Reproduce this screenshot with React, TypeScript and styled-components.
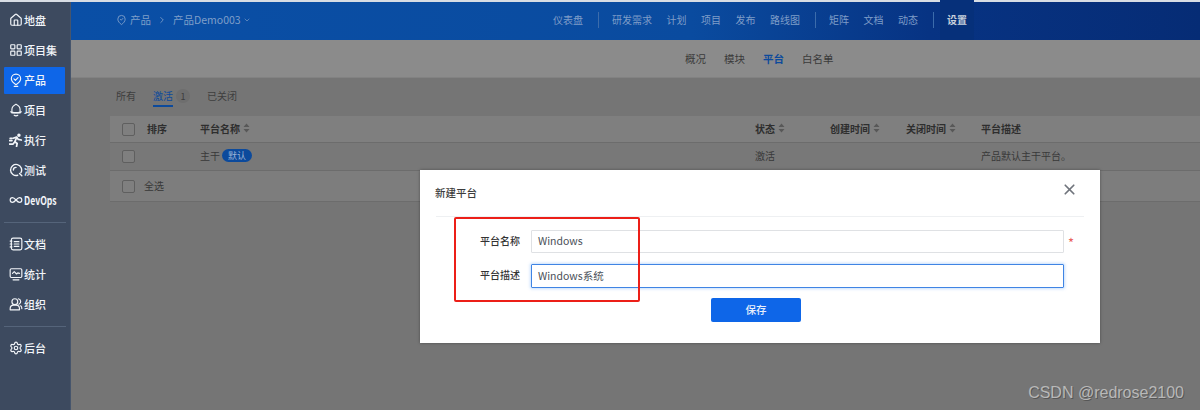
import { ReactNode } from "react";
import styled, { createGlobalStyle } from "styled-components";
import { ChevronDown, ChevronRight, Home, Infinity as InfinityIcon, LayoutGrid, Settings, X } from "lucide-react";

const GlobalStyle = createGlobalStyle`
  html, body {
    margin: 0;
    padding: 0;
    width: 1200px;
    height: 410px;
    overflow: hidden;
    background: #757575;
    font-family: "Noto Sans CJK SC", "Liberation Sans", sans-serif;
  }
  * { box-sizing: border-box; }
`;

const Page = styled.div`
  position: relative;
  display: grid;
  grid-template-columns: 71px 1fr;
  width: 1200px;
  height: 410px;
  padding-top: 2px;
  background: #d8dde4;
  overflow: hidden;
`;

const Sidebar = styled.nav`
  display: flex;
  flex-direction: column;
  padding-top: 5px;
  background: #3d4a5f;
  border-right: 1px solid #46556c;
`;

const NavItem = styled.div<{ $active?: boolean }>`
  display: flex;
  align-items: center;
  height: 27px;
  margin: 0 5px 3px 4px;
  padding: 0 0 2px 5px;
  border-radius: 1px;
  background: ${(p) => (p.$active ? "#0e66e8" : "transparent")};
  color: #f2f5f9;
  font-size: 11px;
  font-weight: 500;
  white-space: nowrap;

  svg {
    flex: none;
    width: 14px;
    height: 14px;
    margin-right: 1px;
  }
`;

const NavLabel = styled.span<{ $narrow?: boolean }>`
  display: inline-block;
  ${(p) => p.$narrow && "font-size: 12px; font-weight: 700; transform: scaleX(0.72); transform-origin: left center;"}
`;

const NavDivider = styled.div`
  height: 1px;
  margin: 5px 4px 8px;
  background: #55647a;
`;

const Main = styled.div`
  display: flex;
  flex-direction: column;
  min-width: 0;
  background: #757575;
`;

const TopBar = styled.header`
  display: flex;
  align-items: center;
  height: 38px;
  padding: 0 0 3px 45px;
  background: linear-gradient(90deg, #0a4fa6 0%, #0a4b9f 55%, #073383 76%, #062c75 100%);
  font-size: 10px;
`;

const Breadcrumb = styled.div`
  display: flex;
  align-items: center;
  gap: 2px;
  width: 437px;
  font-size: 10.5px;
  color: #7f9fc9;

  svg {
    flex: none;
  }
`;

const Crumb = styled.span`
  margin-left: 1px;
`;

const ChevronGap = styled(ChevronRight)`
  margin: 0 3px 0 4px;
`;

const TopMenu = styled.div`
  display: flex;
  align-items: center;
  gap: 14.5px;
`;

const TopLink = styled.span<{ $active?: boolean }>`
  color: ${(p) => (p.$active ? "#c8d0dc" : "#7f9dc8")};
  font-weight: ${(p) => (p.$active ? 700 : 400)};
  ${(p) => p.$active && "margin: -14px -7px -17px; padding: 14px 7px 17px; background: #06307a;"}
`;

const TopDivider = styled.span`
  width: 1px;
  height: 16px;
  margin-right: -1px;
  background: #3c6cab;
`;

const SubBar = styled.div`
  display: flex;
  align-items: center;
  gap: 18px;
  height: 38px;
  padding-left: 614px;
  background: #8b8b8b;
  border-bottom: 1px solid #828282;
  font-size: 10.5px;
`;

const SubLink = styled.span<{ $active?: boolean }>`
  color: ${(p) => (p.$active ? "#0c4a9c" : "#3a3a3a")};
  font-weight: ${(p) => (p.$active ? 700 : 400)};
`;

const Content = styled.div`
  padding: 9px 0 0 39px;
`;

const Tabs = styled.div`
  display: flex;
  align-items: flex-start;
  height: 29px;
  padding-left: 6px;
  font-size: 10px;
`;

const Tab = styled.div<{ $active?: boolean }>`
  height: 20px;
  margin-left: ${(p) => (p.$active ? "17px" : "0")};
  padding-top: 1px;
  line-height: 16px;
  color: ${(p) => (p.$active ? "#0c4a9c" : "#3e3e3e")};
  border-bottom: 2px solid ${(p) => (p.$active ? "#0c4a9c" : "transparent")};
`;

const TabCount = styled.span`
  display: grid;
  place-items: center;
  width: 14px;
  height: 14px;
  margin: 2px 17px 0 3px;
  border-radius: 50%;
  background: #6e6e6e;
  color: #3c3c3c;
  font-size: 9px;
`;

const Table = styled.div`
  display: flex;
  flex-direction: column;
`;

const Row = styled.div<{ $head?: boolean; $foot?: boolean }>`
  display: grid;
  grid-template-columns: 25px 53px 555px 75px 76px 75px 1fr;
  align-items: center;
  height: ${(p) => (p.$foot ? "31px" : p.$head ? "27px" : "28px")};
  padding: 0 0 2px 12px;
  background: ${(p) => (p.$head ? "#7f7f7f" : p.$foot ? "#7d7d7d" : "#787878")};
  border-bottom: 1px solid #6c6c6c;
  font-size: 10px;
  font-weight: ${(p) => (p.$head ? 700 : 400)};
  color: ${(p) => (p.$head ? "#2e2e2e" : "#383838")};
`;

const Check = styled.span`
  display: block;
  width: 13px;
  height: 13px;
  margin-top: 2px;
  border: 1px solid #5f5f5f;
  border-radius: 2px;
  background: #7f7f7f;
`;

const HeadCell = styled.span`
  display: inline-flex;
  align-items: center;
  gap: 3px;
`;

const Name = styled.span`
  display: flex;
  align-items: center;
  gap: 2px;
`;

const DefaultTag = styled.span`
  height: 13px;
  padding: 0 6px;
  border-radius: 7px;
  background: #0c4a9c;
  color: #9cb4d6;
  font-size: 9px;
  line-height: 13px;
`;

const SelectAll = styled.span`
  margin-left: -3px;
  grid-column: 2 / span 2;
`;

const Sort = ({ children }: { children: ReactNode }) => (
  <HeadCell>
    {children}
    <svg width="7" height="10" viewBox="0 0 7 10" fill="#585858">
      <path d="M3.500 0.500 6.500 4H.5zM3.500 9.500 .5 6h6z" />
    </svg>
  </HeadCell>
);

const Modal = styled.div`
  position: absolute;
  left: 420px;
  top: 170px;
  width: 680px;
  height: 173px;
  padding: 0 16px;
  background: #fff;
  box-shadow: 0 0 3px rgba(0, 0, 0, 0.35);
`;

const ModalHead = styled.div`
  display: flex;
  align-items: center;
  justify-content: space-between;
  height: 47px;
  padding-bottom: 2px;
  border-bottom: 1px solid #eef0f2;
  font-size: 10.5px;
  font-weight: 500;
  color: #3c3c3c;
`;

const Title = styled.span`
  margin-left: -1px;
`;

const CloseIcon = styled(X)`
  margin: -5px 6px 0 0;
  color: #70747c;
`;

const Form = styled.div`
  display: flex;
  flex-direction: column;
  gap: 11px;
  padding-top: 13px;
`;

const Field = styled.div`
  display: flex;
  align-items: center;
`;

const FieldLabel = styled.label`
  width: 84px;
  margin: -3px 11px 0 0;
  text-align: right;
  font-size: 10px;
  font-weight: 500;
  color: #333;
`;

const FieldBox = styled.div<{ $focus?: boolean }>`
  display: flex;
  align-items: center;
  width: 533px;
  height: ${(p) => (p.$focus ? "24px" : "23px")};
  padding: 0 0 2px 6px;
  border: 1px solid ${(p) => (p.$focus ? "#3f84e4" : "#dfe1e4")};
  border-radius: 1px;
  box-shadow: ${(p) => (p.$focus ? "0 0 3px 1px rgba(90, 160, 245, 0.35)" : "none")};
  font-size: 10.5px;
  color: #4a5058;
`;

const Star = styled.span`
  margin: 2px 0 0 4px;
  color: #e9605c;
  font-size: 13px;
  line-height: 1;
`;

const SaveRow = styled.div`
  display: flex;
  padding: 10px 0 0 275px;
`;

const SaveButton = styled.button`
  width: 90px;
  height: 24px;
  padding: 0 0 2px;
  border: 0;
  border-radius: 2px;
  background: #0e66e8;
  color: #e6effc;
  font: 500 10.5px "Noto Sans CJK SC", sans-serif;
`;

const Highlight = styled.div`
  position: absolute;
  left: 454px;
  top: 217px;
  width: 186px;
  height: 85px;
  border: 2px solid #ec1f18;
  border-radius: 2px;
  pointer-events: none;
`;

const Watermark = styled.div`
  position: absolute;
  right: 16px;
  bottom: 8px;
  font-family: "Liberation Sans", sans-serif;
  font-size: 16px;
  color: #b8b8b8;
  text-shadow: 1px 1px 0 rgba(60, 60, 60, 0.55);
`;

const Icon = ({ children, weight = 2 }: { children: ReactNode; weight?: number }) => (
  <svg viewBox="0 0 24 24" fill="none" stroke="currentColor" strokeWidth={weight} strokeLinecap="round" strokeLinejoin="round">
    {children}
  </svg>
);

const navGroups: { icon: ReactNode; label: string; active?: boolean; narrow?: boolean }[][] = [
  [
    { icon: <Home />, label: "地盘" },
    { icon: <LayoutGrid />, label: "项目集" },
    {
      icon: (
        <Icon>
          <path d="M12 20c-4-2.500-8-6-8-10a8 8 0 0 1 16 0c0 4-4 7.500-8 10z" />
          <path d="m8.500 10 2.500 2.500 4.500-4.500" />
          <path d="M9 23h6" />
        </Icon>
      ),
      label: "产品",
      active: true,
    },
    {
      icon: (
        <Icon>
          <path d="M12 2c4 2 7 5 7 9v6H5v-6c0-4 3-7 7-9z" />
          <path d="M3 15c2 2 16 2 18 0" />
          <path d="M9 21c1.500 1.500 4.500 1.500 6 0" />
        </Icon>
      ),
      label: "项目",
    },
    {
      icon: (
        <Icon weight={3}>
          <circle cx="17" cy="4" r="1.500" />
          <path d="m7 9 6-2 3 4 5 1" />
          <path d="m13 8-3 7 4 3-1 5" />
          <path d="M10 15 7 19H1" />
          <path d="M2 9h3M1 13h4" />
        </Icon>
      ),
      label: "执行",
    },
    {
      icon: (
        <Icon weight={2.4}>
          <path d="M15 21a9.500 9.500 0 1 1 5.500-4.500" />
          <path d="m18 18 4 4" />
          <path d="M7.500 12a4.500 4.500 0 0 1 4.500-4.500" />
        </Icon>
      ),
      label: "测试",
    },
    { icon: <InfinityIcon />, label: "DevOps", narrow: true },
  ],
  [
    {
      icon: (
        <Icon>
          <rect x="4" y="2" width="18" height="20" rx="3" />
          <path d="M9 8h8M9 12h8M9 16h8M2 7h3M2 12h3M2 17h3" />
        </Icon>
      ),
      label: "文档",
    },
    {
      icon: (
        <Icon>
          <rect x="2" y="3" width="20" height="15" rx="2" />
          <path d="m6 11 3-3 4 4 2-2 3 1" />
          <path d="M7 22h10" />
        </Icon>
      ),
      label: "统计",
    },
    {
      icon: (
        <Icon>
          <circle cx="10" cy="8" r="5" />
          <path d="M2 22v-2a6 6 0 0 1 6-6h4a6 6 0 0 1 6 6v2z" />
          <path d="M16 3a5 5 0 0 1 1 9.500M20 15a6 6 0 0 1 2 5" />
        </Icon>
      ),
      label: "组织",
    },
  ],
  [{ icon: <Settings />, label: "后台" }],
];

const topMenu = [["仪表盘"], ["研发需求", "计划", "项目", "发布", "路线图"], ["矩阵", "文档", "动态"], ["设置"]];

export default function App() {
  return (
    <Page>
      <GlobalStyle />
      <Sidebar>
        {navGroups.map((group, i) => (
          <div key={i}>
            {i > 0 && <NavDivider />}
            {group.map((item) => (
              <NavItem key={item.label} $active={item.active}>
                {item.icon}
                <NavLabel $narrow={item.narrow}>{item.label}</NavLabel>
              </NavItem>
            ))}
          </div>
        ))}
      </Sidebar>

      <Main>
        <TopBar>
          <Breadcrumb>
            <svg width="11" height="12" viewBox="0 0 24 24" fill="none" stroke="currentColor" strokeWidth="2">
              <path d="M12 22c-4-3-8-7-8-12a8 8 0 0 1 16 0c0 5-4 9-8 12z" />
              <path d="m9 10 2.500 2.500L15.500 8" />
            </svg>
            <Crumb>产品</Crumb>
            <ChevronGap size={10} />
            <Crumb>产品Demo003</Crumb>
            <ChevronDown size={8} />
          </Breadcrumb>
          <TopMenu>
            {topMenu.map((group, i) => (
              <TopMenu key={i}>
                {i > 0 && <TopDivider />}
                {group.map((label) => (
                  <TopLink key={label} $active={label === "设置"}>
                    {label}
                  </TopLink>
                ))}
              </TopMenu>
            ))}
          </TopMenu>
        </TopBar>

        <SubBar>
          <SubLink>概况</SubLink>
          <SubLink>模块</SubLink>
          <SubLink $active>平台</SubLink>
          <SubLink>白名单</SubLink>
        </SubBar>

        <Content>
          <Tabs>
            <Tab>所有</Tab>
            <Tab $active>激活</Tab>
            <TabCount>1</TabCount>
            <Tab>已关闭</Tab>
          </Tabs>
          <Table>
            <Row $head>
              <Check />
              <span>排序</span>
              <Sort>平台名称</Sort>
              <Sort>状态</Sort>
              <Sort>创建时间</Sort>
              <Sort>关闭时间</Sort>
              <span>平台描述</span>
            </Row>
            <Row>
              <Check />
              <span />
              <Name>
                主干 <DefaultTag>默认</DefaultTag>
              </Name>
              <span>激活</span>
              <span />
              <span />
              <span>产品默认主干平台。</span>
            </Row>
            <Row $foot>
              <Check />
              <SelectAll>全选</SelectAll>
            </Row>
          </Table>
        </Content>
      </Main>

      <Modal>
        <ModalHead>
          <Title>新建平台</Title>
          <CloseIcon size={17} strokeWidth={2.4} />
        </ModalHead>
        <Form>
          <Field>
            <FieldLabel>平台名称</FieldLabel>
            <FieldBox>Windows</FieldBox>
            <Star>*</Star>
          </Field>
          <Field>
            <FieldLabel>平台描述</FieldLabel>
            <FieldBox $focus>Windows系统</FieldBox>
          </Field>
        </Form>
        <SaveRow>
          <SaveButton>保存</SaveButton>
        </SaveRow>
      </Modal>

      <Highlight />
      <Watermark>CSDN @redrose2100</Watermark>
    </Page>
  );
}
